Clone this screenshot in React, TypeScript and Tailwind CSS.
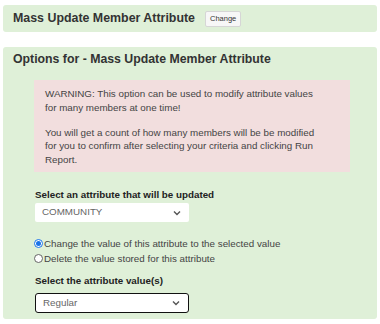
import React from "react";

function Chevron() {
  return (
    <svg width="8" height="6" viewBox="0 0 8 6" className="shrink-0">
      <path d="M1 1.5 L4 4.5 L7 1.5" fill="none" stroke="#555" strokeWidth="1.4" />
    </svg>
  );
}

function Radio({ checked }: { checked?: boolean }) {
  return checked ? (
    <span className="w-[9px] h-[9px] rounded-full border border-[#1a73e8] bg-white flex items-center justify-center shrink-0">
      <span className="block w-[5px] h-[5px] rounded-full bg-[#1a73e8]" />
    </span>
  ) : (
    <span className="block w-[9px] h-[9px] rounded-full border border-[#666] bg-white shrink-0" />
  );
}

export default function App() {
  return (
    <div className="w-[380px] h-[324px] bg-white text-[#333]" style={{ fontFamily: '"Liberation Sans", Arial, sans-serif' }}>
      <div className="h-[5px]" />
      <div className="mx-[3px] h-[27px] bg-[#dff0d8] rounded-[3px] flex items-center pl-[10px]">
        <span className="text-[12.4px] font-bold leading-none">Mass Update Member Attribute</span>
        <span className="ml-[10px] h-[16px] px-[4px] flex items-center bg-[#f7f7f7] border border-[#d6d6d6] rounded-[2px] text-[7.5px] text-[#333] leading-none">Change</span>
      </div>
      <div className="mt-[15px] mx-[3px] h-[272px] bg-[#dff0d8] rounded-[3px] pt-[5px]">
        <div className="pl-[10px] h-[15px] flex items-center text-[12.3px] font-bold leading-none">Options for - Mass Update Member Attribute</div>
        <div className="ml-[31px] w-[316px] mt-[13px] bg-[#f2dede] pl-[11px] pr-[6px] pt-[7px] pb-[6px] text-[9.8px] leading-[13.5px] text-[#444] whitespace-nowrap">
          <p>
            WARNING: This option can be used to modify attribute values
            <br />
            for many members at one time!
          </p>
          <p className="mt-[11.5px]">
            You will get a count of how many members will be be modified
            <br />
            for you to confirm after selecting your criteria and clicking Run
            <br />
            Report.
          </p>
        </div>
        <div className="ml-[32px]">
          <div className="mt-[16px] text-[9.8px] font-bold leading-[14px] text-[#222]">Select an attribute that will be updated</div>
          <div className="mt-[1px] w-[154px] h-[19px] bg-white rounded-[2px] flex items-center justify-between pl-[7px] pr-[8px] text-[9.8px] text-[#666]">
            <span>COMMUNITY</span>
            <Chevron />
          </div>
          <div className="mt-[14px] flex items-center gap-[1px] text-[9.8px] leading-[15px] text-[#444]">
            <span className="-ml-[1px] flex"><Radio checked /></span>
            <span>Change the value of this attribute to the selected value</span>
          </div>
          <div className="flex items-center gap-[1px] text-[9.8px] leading-[15px] text-[#444]">
            <span className="-ml-[1px] flex"><Radio /></span>
            <span>Delete the value stored for this attribute</span>
          </div>
          <div className="mt-[8px] text-[9.8px] font-bold leading-[14px] text-[#222]">Select the attribute value(s)</div>
          <div className="mt-[5px] w-[154px] h-[20px] bg-white border-[1.5px] border-[#111] rounded-[3px] flex items-center justify-between pl-[7px] pr-[8px] text-[9.8px] text-[#666]">
            <span>Regular</span>
            <Chevron />
          </div>
        </div>
      </div>
    </div>
  );
}
